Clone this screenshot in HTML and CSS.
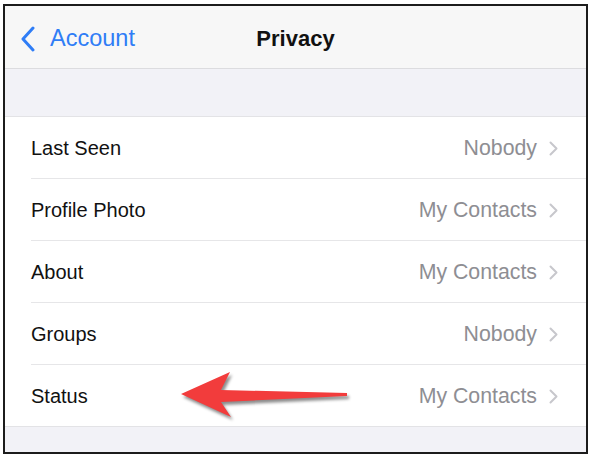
FILE: index.html
```html
<!DOCTYPE html>
<html lang="en">
<head>
  <meta charset="UTF-8" />
  <title>Privacy</title>
  <link rel="stylesheet" href="styles.css">
</head>
<body>
  <div class="frame">
    <!-- nav bar -->
    <div class="nav">
      <div class="back">
        <svg class="back-icon" width="16" height="26" viewBox="0 0 16 26">
          <path d="M13 2 L3 13 L13 24" fill="none" stroke="#2f7df6" stroke-width="3" stroke-linecap="round" stroke-linejoin="round"/>
        </svg>
        <span>Account</span>
      </div>
      <div class="title">Privacy</div>
    </div>

    <div class="spacer"></div>

    <div class="list">
      <div class="row">
        <span class="label">Last Seen</span>
        <span class="value">Nobody</span>
        <svg class="chev" width="9" height="15" viewBox="0 0 9 15"><path d="M1.5 1.5 L7.5 7.5 L1.5 13.5" fill="none" stroke="#c7c7cc" stroke-width="2" stroke-linecap="round" stroke-linejoin="round"/></svg>
      </div>
      <div class="row">
        <span class="label">Profile Photo</span>
        <span class="value">My Contacts</span>
        <svg class="chev" width="9" height="15" viewBox="0 0 9 15"><path d="M1.5 1.5 L7.5 7.5 L1.5 13.5" fill="none" stroke="#c7c7cc" stroke-width="2" stroke-linecap="round" stroke-linejoin="round"/></svg>
      </div>
      <div class="row">
        <span class="label">About</span>
        <span class="value">My Contacts</span>
        <svg class="chev" width="9" height="15" viewBox="0 0 9 15"><path d="M1.5 1.5 L7.5 7.5 L1.5 13.5" fill="none" stroke="#c7c7cc" stroke-width="2" stroke-linecap="round" stroke-linejoin="round"/></svg>
      </div>
      <div class="row">
        <span class="label">Groups</span>
        <span class="value">Nobody</span>
        <svg class="chev" width="9" height="15" viewBox="0 0 9 15"><path d="M1.5 1.5 L7.5 7.5 L1.5 13.5" fill="none" stroke="#c7c7cc" stroke-width="2" stroke-linecap="round" stroke-linejoin="round"/></svg>
      </div>
      <div class="row">
        <span class="label">Status</span>
        <span class="value">My Contacts</span>
        <svg class="chev" width="9" height="15" viewBox="0 0 9 15"><path d="M1.5 1.5 L7.5 7.5 L1.5 13.5" fill="none" stroke="#c7c7cc" stroke-width="2" stroke-linecap="round" stroke-linejoin="round"/></svg>
      </div>
    </div>

    <!-- annotation arrow -->
    <svg class="arrow" width="180" height="60" viewBox="0 0 180 60">
      <path d="M2,23 L51,1 L42,19 L168,22 L168,25 L42,31 L52,46 Z" fill="#f23c3c"/>
    </svg>
  </div>
</body>
</html>
```

FILE: styles.css
```css
body {
  margin: 0;
  padding: 0;
  background: #fff;
  font-family: "Liberation Sans", Arial, sans-serif;
}
.frame {
  position: relative;
  margin: 4px 0 0 3px;
  width: 581px;
  height: 446px;
  border: 2px solid #1c1c1c;
  background: #f2f2f7;
  overflow: hidden;
}
.nav {
  height: 63px;
  padding-top: 3px;
  box-sizing: border-box;
  background: #f7f7f7;
  border-bottom: 1px solid #dcdcdf;
  display: flex;
  align-items: center;
  position: relative;
}
.back {
  display: flex;
  align-items: center;
  gap: 14px;
  padding-left: 15px;
  color: #2f7df6;
  font-size: 23.5px;
}
.title {
  position: absolute;
  left: 0;
  right: 0;
  text-align: center;
  font-size: 22px;
  font-weight: bold;
  color: #111;
  pointer-events: none;
}
.spacer {
  height: 47px;
  border-bottom: 1px solid #e3e3e6;
}
.list {
  background: #fff;
  border-bottom: 1px solid #e3e3e6;
}
.row {
  height: 62px;
  padding-top: 2px;
  display: flex;
  align-items: center;
  margin-left: 26px;
  padding-right: 28px;
  border-bottom: 1px solid #e6e6e8;
  box-sizing: border-box;
}
.row:last-child {
  border-bottom: none;
  height: 61px;
}
.label {
  flex: 1;
  font-size: 20px;
  color: #111;
}
.value {
  font-size: 21.3px;
  color: #8e8e93;
  margin-right: 12px;
}
.arrow {
  position: absolute;
  left: 174px;
  top: 365px;
  filter: drop-shadow(2px 3px 1.5px rgba(0,0,0,0.45));
}
```
